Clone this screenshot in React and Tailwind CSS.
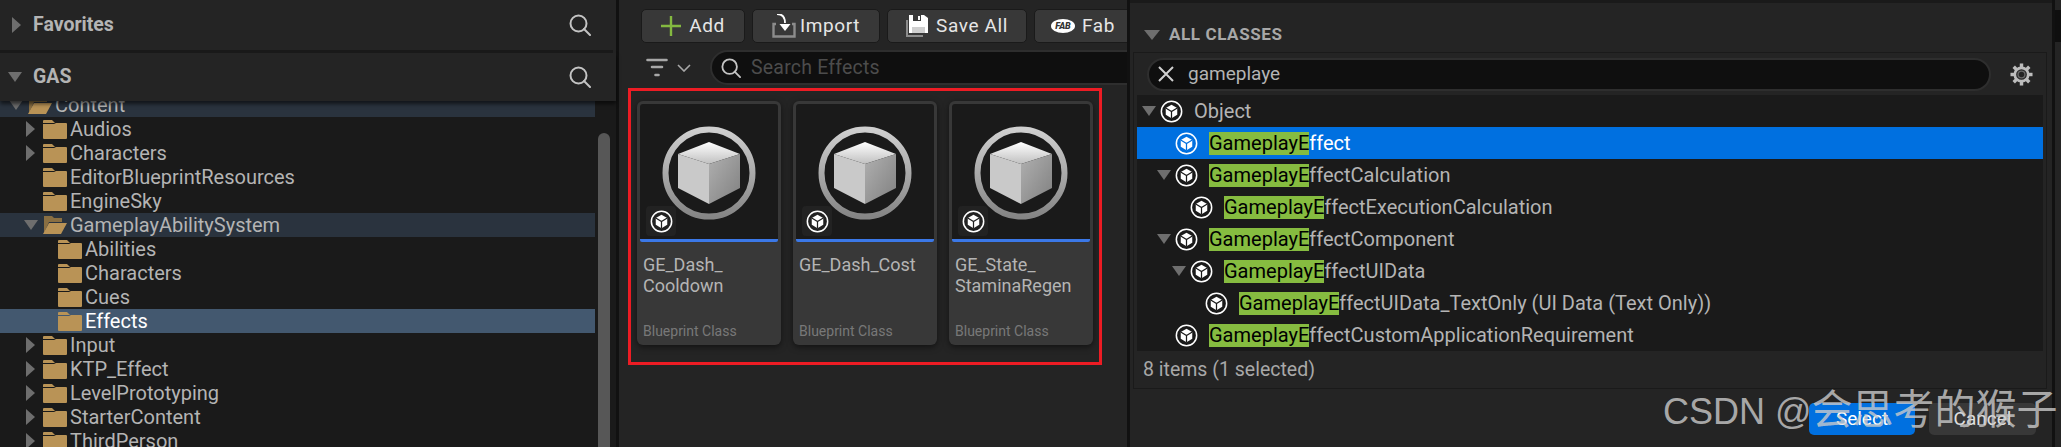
import React from 'react';

const roboto = { fontFamily: 'Roboto, sans-serif' };

function SearchIcon({ className = 'w-[22px] h-[22px]' }) {
  return (
    <svg viewBox="0 0 22 22" className={className} fill="none" stroke="#c4c4c4" strokeWidth="2">
      <circle cx="9.5" cy="9.5" r="8" />
      <path d="M15 15l6 6" strokeLinecap="round" />
    </svg>
  );
}

function Arrow({ open }) {
  if (open) {
    return (
      <svg viewBox="0 0 14 14" className="w-[14px] h-[14px] shrink-0" fill="#6e6e6e">
        <path d="M0 2h14L7 12z" />
      </svg>
    );
  }
  return (
    <svg viewBox="0 0 14 16" className="w-[14px] h-[16px] shrink-0" fill="#6e6e6e">
      <path d="M2 0v16l9-8z" />
    </svg>
  );
}

function Folder({ open }) {
  return (
    <svg viewBox="0 0 24 19" className="w-[24px] h-[19px] shrink-0">
      {open ? (
        <>
          <path d="M1 0h8l2 2h8v4H6L1 17z" fill="#8a6f42" />
          <path d="M6 7h18l-6 11H0z" fill="#b99356" />
        </>
      ) : (
        <>
          <path d="M1 0h8l3 3H0V1a1 1 0 011-1z" fill="#b99356" />
          <path d="M0 4h11l2-1h10a1 1 0 011 1v14a1 1 0 01-1 1H1a1 1 0 01-1-1z" fill="#b99356" />
        </>
      )}
    </svg>
  );
}

function TreeRow({ name, depth, arrow, open, active, selected }) {
  const left = [9, 24, 39][depth];
  let rowBg = '';
  if (active) rowBg = 'bg-[#2a333e]';
  if (selected) rowBg = 'bg-[#43586f]';
  return (
    <div className={`h-[24px] w-[595px] flex items-center ${rowBg}`} style={{ paddingLeft: left }}>
      <div className="w-[19px] shrink-0">{arrow && <Arrow open={open} />}</div>
      <Folder open={open} />
      <span className={`ml-[3px] text-[20px] leading-[24px] ${selected ? 'text-white' : 'text-[#b4b4b4]'}`}>{name}</span>
    </div>
  );
}

const folders = [
  { name: 'Content', depth: 0, arrow: true, open: true, active: true },
  { name: 'Audios', depth: 1, arrow: true },
  { name: 'Characters', depth: 1, arrow: true },
  { name: 'EditorBlueprintResources', depth: 1 },
  { name: 'EngineSky', depth: 1 },
  { name: 'GameplayAbilitySystem', depth: 1, arrow: true, open: true, active: true },
  { name: 'Abilities', depth: 2 },
  { name: 'Characters', depth: 2 },
  { name: 'Cues', depth: 2 },
  { name: 'Effects', depth: 2, selected: true },
  { name: 'Input', depth: 1, arrow: true },
  { name: 'KTP_Effect', depth: 1, arrow: true },
  { name: 'LevelPrototyping', depth: 1, arrow: true },
  { name: 'StarterContent', depth: 1, arrow: true },
  { name: 'ThirdPerson', depth: 1, arrow: true },
];

function ClassIcon({ className = 'w-[24px] h-[24px]', dark = '#1a1a1a' }) {
  return (
    <svg viewBox="0 0 24 24" className={`shrink-0 ${className}`} fill="none">
      <circle cx="12" cy="12" r="10.6" stroke="#fff" strokeWidth="1.6" />
      <path d="M12 5l6 3.4v7L12 19l-6-3.6v-7z" fill="#fff" />
      <path d="M6 8.4l6 3.6 6-3.6M12 12v7" stroke={dark} strokeWidth="1.3" />
    </svg>
  );
}

function BigClassIcon({ id }) {
  return (
    <svg viewBox="0 0 96 96" className="w-[96px] h-[96px]" fill="none">
      <defs>
        <linearGradient id={`ring${id}`} x1="0" y1="0" x2="0" y2="1">
          <stop offset="0" stopColor="#cfcfcf" />
          <stop offset="1" stopColor="#858585" />
        </linearGradient>
        <linearGradient id={`top${id}`} x1="0" y1="0" x2="0" y2="1">
          <stop offset="0" stopColor="#ffffff" />
          <stop offset="1" stopColor="#c0c0c0" />
        </linearGradient>
        <linearGradient id={`right${id}`} x1="0" y1="0" x2="1" y2="1">
          <stop offset="0" stopColor="#b0b0b0" />
          <stop offset="1" stopColor="#808080" />
        </linearGradient>
      </defs>
      <circle cx="48" cy="48" r="43.5" stroke={`url(#ring${id})`} strokeWidth="6" />
      <path d="M48 17l31 12-31 10-31-10z" fill={`url(#top${id})`} />
      <path d="M17 29l31 10v40L17 63z" fill="#c9c9c9" />
      <path d="M79 29L48 39v40l31-16z" fill={`url(#right${id})`} />
    </svg>
  );
}

function AssetCard({ id, lines }) {
  return (
    <div className="w-[144px] h-[244px] rounded-[6px] bg-[#383838] shadow-[0_2px_6px_rgba(0,0,0,0.5)] flex flex-col overflow-hidden">
      <div className="mx-[3px] mt-[3px] h-[135px] bg-[#1a1a1a] rounded-t-[3px] flex flex-col">
        <div className="flex justify-center pt-[21px] h-[102px] shrink-0">
          <BigClassIcon id={id} />
        </div>
        <div className="ml-[6px] w-[30px] h-[30px] rounded-[4px] bg-[#222222] flex items-center justify-center">
          <ClassIcon className="w-[23px] h-[23px]" dark="#222222" />
        </div>
      </div>
      <div className="mx-[3px] h-[3px] bg-[#3b78e7] rounded-b-[2px]" />
      <div className="flex-1 flex flex-col px-[6px] pt-[12px] pb-[4px]">
        <div className="flex-1 text-[18px] leading-[21px] text-[#b4b4b4]">
          {lines.map((l) => <div key={l}>{l}</div>)}
        </div>
        <div className="text-[14px] leading-[20px] text-[#787878]">Blueprint Class</div>
      </div>
    </div>
  );
}

function ToolButton({ width, icon, label, gap = 'gap-[8px]' }) {
  return (
    <div className={`h-[34px] shrink-0 rounded-[5px] bg-[#383838] border border-[#1a1a1a] flex items-center justify-center ${gap}`} style={{ width }}>
      {icon}
      <span className="text-[19px] tracking-[0.6px] text-[#e6e6e6]">{label}</span>
    </div>
  );
}

function ClassRow({ depth, arrow, rest, selected }) {
  return (
    <div className={`h-[32px] flex items-center ${selected ? 'bg-[#0070e0]' : ''}`} style={{ paddingLeft: 5 + depth * 15 }}>
      <div className="w-[18px] shrink-0">{arrow && <Arrow open />}</div>
      <ClassIcon className="w-[23px] h-[23px]" dark={selected ? '#0070e0' : '#1a1a1a'} />
      <span className="ml-[11px] text-[20px] leading-[23px] whitespace-nowrap">
        <span className="inline-block bg-[#86bc40] text-black">GameplayE</span>
        <span className={selected ? 'text-white' : 'text-[#b4b4b4]'}>{rest}</span>
      </span>
    </div>
  );
}

const classes = [
  { depth: 1, rest: 'ffect', selected: true },
  { depth: 1, rest: 'ffectCalculation', arrow: true },
  { depth: 2, rest: 'ffectExecutionCalculation' },
  { depth: 1, rest: 'ffectComponent', arrow: true },
  { depth: 2, rest: 'ffectUIData', arrow: true },
  { depth: 3, rest: 'ffectUIData_TextOnly (UI Data (Text Only))' },
  { depth: 1, rest: 'ffectCustomApplicationRequirement' },
];

function Gear() {
  return (
    <svg viewBox="0 0 24 24" className="w-[23px] h-[23px]" fill="none">
      {[0, 45, 90, 135, 180, 225, 270, 315].map((a) => (
        <rect key={a} x="10.2" y="0.5" width="3.6" height="5" fill="#bdbdbd" transform={`rotate(${a} 12 12)`} />
      ))}
      <circle cx="12" cy="12" r="7" stroke="#bdbdbd" strokeWidth="2.8" />
      <circle cx="12" cy="12" r="3.6" stroke="#6a6a6a" strokeWidth="1.4" />
    </svg>
  );
}

export default function App() {
  return (
    <div className="relative w-[2061px] h-[447px] flex overflow-hidden bg-[#111111] text-[#b4b4b4]" style={roboto}>
      {/* content browser sources */}
      <div className="w-[616px] shrink-0 bg-[#242424] flex flex-col">
        <div className="w-[613px] h-[50px] flex items-center pl-[10px] pr-[22px] shrink-0">
          <Arrow />
          <span className="ml-[9px] text-[19.5px] font-bold text-[#b4b4b4]">Favorites</span>
          <div className="ml-auto"><SearchIcon /></div>
        </div>
        <div className="w-[613px] h-[3px] bg-[#1a1a1a] shrink-0" />
        <div className="relative z-10 h-[48px] bg-[#242424] shadow-[0_3px_4px_rgba(0,0,0,0.6)] flex items-center pl-[8px] pr-[25px] shrink-0">
          <Arrow open />
          <span className="ml-[11px] text-[19.5px] font-bold text-[#b4b4b4]">GAS</span>
          <div className="ml-auto"><SearchIcon /></div>
        </div>
        <div className="flex-1 flex overflow-hidden bg-[#1a1a1a]">
          <div className="w-[595px] -mt-[8px] shrink-0">
            {folders.map((f, i) => <TreeRow key={i} {...f} />)}
          </div>
          <div className="w-[12px] ml-[3px] mt-[32px] bg-[#575757] rounded-t-[6px]" />
        </div>
      </div>
      <div className="w-[3px] shrink-0 bg-[#111111]" />

      {/* content area */}
      <div className="w-[508px] shrink-0 bg-[#242424] flex flex-col overflow-hidden">
        <div className="flex gap-[7px] pl-[22px] pt-[9px]">
          <ToolButton
            width={104}
            label="Add"
            icon={
              <svg viewBox="0 0 20 20" className="w-[20px] h-[20px]" fill="none" stroke="#84b940" strokeWidth="2.4">
                <path d="M10 0v20M0 10h20" />
              </svg>
            }
          />
          <ToolButton
            width={128}
            label="Import"
            gap="gap-[4px]"
            icon={
              <svg viewBox="0 0 24 24" className="w-[24px] h-[24px]" fill="none">
                <path d="M4 10H1.5v12.5h21V10H20" stroke="#8c8c8c" strokeWidth="2.4" />
                <path d="M5 0c5 0 8 3 8 9" stroke="#fff" strokeWidth="1.8" />
                <path d="M7.5 10h11L13 17z" fill="#fff" />
              </svg>
            }
          />
          <ToolButton
            width={140}
            label="Save All"
            icon={
              <svg viewBox="0 0 22 22" className="w-[22px] h-[22px]" fill="none">
                <path d="M0 5v17h17v-2H2V5z" fill="#8c8c8c" />
                <path d="M3 0h15l4 3v15H3z" fill="#fff" />
                <path d="M7 0h8v6H7z" fill="#3a3a3a" />
                <path d="M12 1h2v4h-2z" fill="#fff" />
                <path d="M6 12h13v6H6z" fill="#cfcfcf" />
              </svg>
            }
          />
          <ToolButton
            width={98}
            label="Fab"
            gap="gap-[7px]"
            icon={
              <svg viewBox="0 0 24 16" className="w-[24px] h-[16px]">
                <ellipse cx="12" cy="8" rx="12" ry="7" fill="#fff" />
                <text x="12" y="11" textAnchor="middle" fontSize="9" fontWeight="900" fontStyle="italic" fill="#333" fontFamily="Roboto, sans-serif">FAB</text>
              </svg>
            }
          />
        </div>
        <div className="flex items-center mt-[7px] h-[35px] pl-[27px]">
          <svg viewBox="0 0 22 20" className="w-[22px] h-[20px] shrink-0" fill="none" stroke="#a8a8a8" strokeWidth="2.6" strokeLinecap="round">
            <path d="M1.5 2h19M6 9h10M9.5 17h3" />
          </svg>
          <svg viewBox="0 0 14 8" className="w-[14px] h-[8px] ml-[9px] shrink-0" fill="none" stroke="#a8a8a8" strokeWidth="1.6">
            <path d="M1 1l6 6 6-6" />
          </svg>
          <div className="ml-[19px] h-[35px] w-[430px] shrink-0 bg-[#0f0f0f] border-2 border-[#2e2e2e] rounded-l-[18px] flex items-center pl-[9px]">
            <SearchIcon className="w-[20px] h-[20px]" />
            <span className="ml-[10px] text-[19.5px] tracking-[0.2px] text-[#4c4c4c]">Search Effects</span>
          </div>
        </div>
        <div className="ml-[9px] mt-[3px] w-[474px] h-[277px] border-[3px] border-[#ed1c24] flex gap-[12px] pl-[6px] pt-[10px]">
          <AssetCard id="a" lines={['GE_Dash_', 'Cooldown']} />
          <AssetCard id="b" lines={['GE_Dash_Cost']} />
          <AssetCard id="c" lines={['GE_State_', 'StaminaRegen']} />
        </div>
      </div>
      <div className="w-[3px] shrink-0 bg-[#111111]" />

      {/* class picker */}
      <div className="w-[922px] shrink-0 bg-[#242424] flex flex-col">
        <div className="h-[3px] bg-[#1a1a1a]" />
        <div className="h-[49px] flex items-center pl-[14px] pt-[15px]">
          <svg viewBox="0 0 16 12" className="w-[16px] h-[12px]" fill="#6e6e6e"><path d="M0 1h16L8 11z" /></svg>
          <span className="ml-[9px] text-[17px] font-bold tracking-[0.6px] text-[#a8a8a8]">ALL CLASSES</span>
        </div>
        <div className="ml-[3px] mr-[5px] h-[337px] border border-[#1a1a1a] flex flex-col">
          <div className="h-[42px] flex items-center pl-[13px] shrink-0">
            <div className="w-[844px] h-[33px] bg-[#0f0f0f] border-2 border-[#2e2e2e] rounded-full flex items-center pl-[9px]">
              <svg viewBox="0 0 16 16" className="w-[16px] h-[16px] shrink-0" fill="none" stroke="#d0d0d0" strokeWidth="2">
                <path d="M1 1l14 14M15 1L1 15" />
              </svg>
              <span className="ml-[14px] text-[19px] text-[#b4b4b4]">gameplaye</span>
            </div>
            <div className="ml-[19px]"><Gear /></div>
          </div>
          <div className="mx-[3px] h-[256px] bg-[#1a1a1a] shrink-0">
            <div className="h-[32px] flex items-center pl-[5px]">
              <div className="w-[18px] shrink-0"><Arrow open /></div>
              <ClassIcon className="w-[23px] h-[23px]" />
              <span className="ml-[11px] text-[20px] text-[#b4b4b4]">Object</span>
            </div>
            {classes.map((c) => <ClassRow key={c.rest} {...c} />)}
          </div>
          <div className="flex-1 flex items-center pl-[9px] text-[19.5px] text-[#a8a8a8]">8 items (1 selected)</div>
        </div>
        <div className="flex justify-end gap-[14px] pr-[16px] mt-[14px]">
          <div className="w-[106px] h-[32px] rounded-[5px] bg-[#0070e0] flex items-center justify-center text-[19px] text-white">Select</div>
          <div className="w-[107px] h-[32px] rounded-[5px] bg-[#383838] flex items-center justify-center text-[19px] text-[#e0e0e0]">Cancel</div>
        </div>
      </div>
      <div className="w-[3px] shrink-0 bg-[#111111]" />
      <div className="flex-1 flex flex-col bg-[#242424]">
        <div className="h-[10px]" />
        <div className="h-[32px] bg-[#0f0f0f]" />
      </div>

      {/* blog watermark */}
      <div className="absolute left-[1663px] top-[390px] text-[36px] leading-[40px] whitespace-nowrap text-[#cccccc]/80" style={{ fontFamily: '"Liberation Sans", "Noto Sans CJK SC", sans-serif' }}>
        CSDN @<span className="text-[41px]">会思考的猴子</span>
      </div>
    </div>
  );
}
